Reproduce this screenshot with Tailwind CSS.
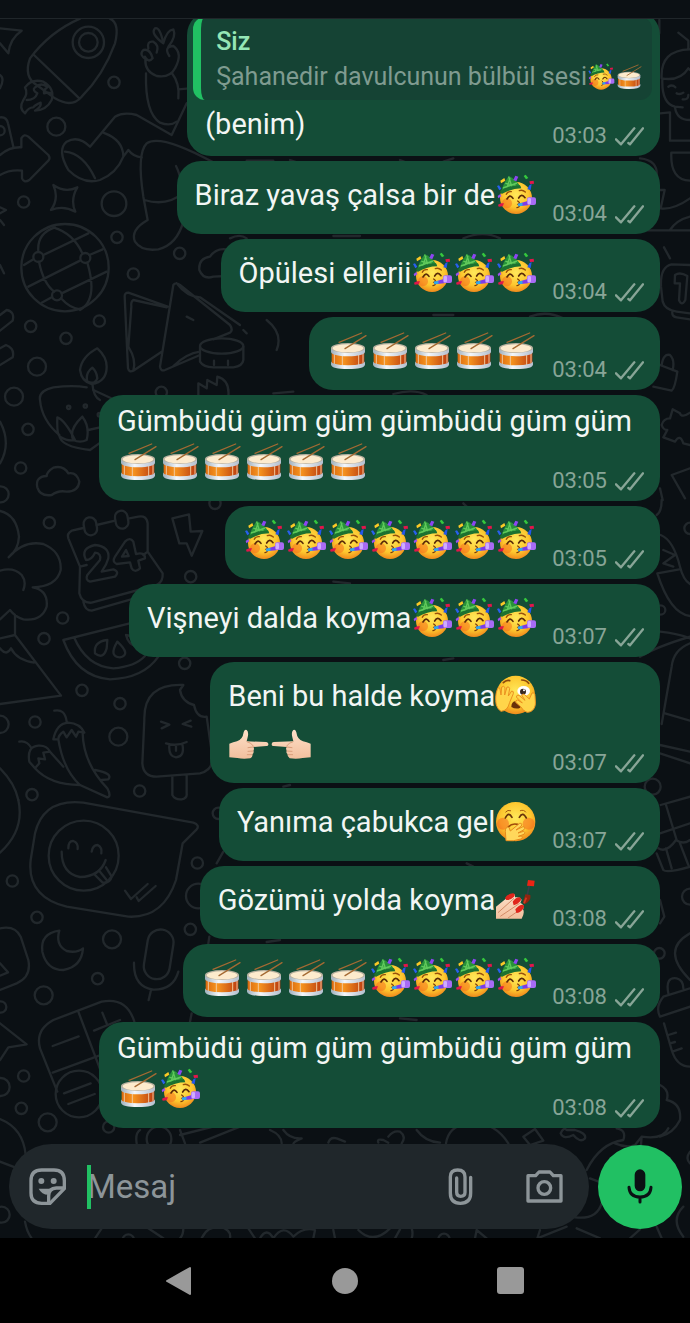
<!DOCTYPE html>
<html lang="tr">
<head>
  <meta charset="UTF-8">
  <meta name="viewport" content="width=device-width, initial-scale=1">
  <title>Sohbet</title>
  <script src="https://cdn.jsdelivr.net/npm/@tailwindcss/browser@4"></script>
</head>
<body class="bg-black font-['Roboto',sans-serif]">

  <!-- Emoji and icon symbols -->
  <svg class="absolute size-0" aria-hidden="true">
    <defs>
      <radialGradient id="skin" cx="50%" cy="40%" r="60%">
        <stop offset="0" stop-color="#ffe85a"/>
        <stop offset=".65" stop-color="#fdc72e"/>
        <stop offset="1" stop-color="#f08a1c"/>
      </radialGradient>
      <linearGradient id="barrel">
        <stop offset="0" stop-color="#d9690f"/>
        <stop offset=".35" stop-color="#f7951f"/>
        <stop offset="1" stop-color="#b93a10"/>
      </linearGradient>
      <linearGradient id="metal">
        <stop offset="0" stop-color="#9fb0bd"/>
        <stop offset=".4" stop-color="#f3f6fa"/>
        <stop offset="1" stop-color="#b3bfce"/>
      </linearGradient>
      <linearGradient id="hand" x1="0" y1="0" x2="0" y2="1">
        <stop offset="0" stop-color="#fde0c8"/>
        <stop offset="1" stop-color="#f2bf9d"/>
      </linearGradient>
    </defs>

    <symbol id="party" viewBox="0 0 126 126">
      <circle cx="63" cy="72" r="48" fill="url(#skin)"/>
      <circle cx="36" cy="88" r="15" fill="#f56a1c" opacity=".5"/>
      <path d="M18 56 C22 38 30 22 41 6 C54 12 68 24 77 38 C62 38 40 46 18 56Z" fill="#279338"/>
      <path d="M31 28 L62 34 M24 42 L66 27 M41 8 L52 42 M45 12 L34 48" stroke="#61c95c" stroke-width="4" fill="none"/>
      <path d="M15 51 Q42 34 75 34 L79 43 Q49 43 20 60Z" fill="#1c7130"/>
      <path d="M34 61 Q38 51 49 53 M73 50 Q82 46 91 54" stroke="#99510b" stroke-width="4" fill="none" stroke-linecap="round"/>
      <path d="M36 75 Q45 59 54 73 M71 72 Q80 57 90 71" stroke="#5b2b08" stroke-width="5" fill="none" stroke-linecap="round"/>
      <path d="M68 81 Q78 87 69 91 Q78 98 66 101" stroke="#7b3a08" stroke-width="4" fill="none" stroke-linecap="round"/>
      <path d="M70 89 L98 81 L99 94 L72 97Z" fill="#7c3be9"/>
      <path d="M68 89 L82 86 L83 95 L70 97Z" fill="#31a9e8"/>
      <rect x="96" y="70" width="27" height="23" rx="6" fill="#a86bf5"/>
      <rect x="98" y="72" width="10" height="19" rx="4" fill="#cfacff"/>
      <path d="M16 20 L28 12 L31 20 L18 28Z" fill="#fbc926"/>
      <path d="M61 5 L70 8 L64 22 L55 18Z" fill="#8c45f2"/>
      <path d="M86 6 L92 2 L100 12 L93 16Z" fill="#35c83e"/>
      <path d="M103 22 L116 20 L117 29 L105 30Z" fill="#e4154b"/>
      <path d="M103 34 L110 30 L107 48 L97 46Z" fill="#2356ec"/>
      <path d="M6 36 L12 34 L19 44 L13 49Z" fill="#2860f0"/>
      <path d="M8 66 L16 60 L19 67 L10 73Z" fill="#9b4ff0"/>
      <path d="M9 92 L18 88 L27 88 L23 97 L11 98Z" fill="#df1749"/>
    </symbol>

    <symbol id="drum" viewBox="0 0 126 126">
      <path d="M14 60 V99 Q14 115 63 116 Q112 115 112 99 V60Z" fill="url(#barrel)"/>
      <path d="M22 70 V105 M46 74 V110 M95 72 V108 M108 68 V100" stroke="#f1c79a" stroke-width="3"/>
      <path d="M12 94 Q14 105 63 106 Q112 105 114 94 V104 Q111 117 63 117 Q15 117 12 104Z" fill="url(#metal)"/>
      <path d="M12 54 V66 Q15 78 63 79 Q111 78 114 66 V54Z" fill="url(#metal)"/>
      <ellipse cx="63" cy="54" rx="51" ry="15" fill="#b7b09f"/>
      <ellipse cx="63" cy="55" rx="46" ry="12" fill="#fdebcd"/>
      <path d="M36 37 L104 9 M54 56 L117 17" stroke="#a56a33" stroke-width="4" stroke-linecap="round"/>
    </symbol>

    <symbol id="peek" viewBox="0 0 126 126">
      <circle cx="62" cy="60" r="58" fill="url(#skin)"/>
      <path d="M25 23 Q34 14 44 17 M80 15 Q94 15 101 25" stroke="#8f4a0c" stroke-width="5" fill="none" stroke-linecap="round"/>
      <ellipse cx="86" cy="48" rx="19" ry="15" fill="#fff"/>
      <circle cx="84" cy="50" r="9" fill="#3a2a22"/>
      <circle cx="87" cy="46" r="3" fill="#fff"/>
      <path d="M49 96 Q49 79 63 79 Q76 80 76 98 Q63 104 49 96Z" fill="#693009"/>
      <path d="M4 90 C0 72 2 50 10 38 Q16 37 16 48 L18 60 L20 36 Q27 31 30 38 L29 60 L36 36 Q43 34 44 41 L40 63 L50 48 Q57 48 55 56 L44 82 Q38 108 18 109 Q8 103 4 90Z" fill="#ffd54a" stroke="#eb9020" stroke-width="3"/>
      <path d="M121 78 C123 95 115 112 96 112 Q84 108 78 96 L62 82 Q61 75 68 75 L82 84 L64 66 Q65 58 72 61 L90 76 L80 60 Q84 55 89 59 L103 72 L111 54 Q120 52 120 62Z" fill="#ffd54a" stroke="#eb9020" stroke-width="3"/>
    </symbol>

    <symbol id="giggle" viewBox="0 0 126 126">
      <circle cx="62" cy="62" r="59" fill="url(#skin)"/>
      <circle cx="24" cy="68" r="18" fill="#f4571c" opacity=".45"/>
      <circle cx="101" cy="68" r="18" fill="#f4571c" opacity=".45"/>
      <path d="M32 33 Q38 25 47 29 M76 29 Q87 25 92 33" stroke="#a55a0e" stroke-width="3" fill="none" stroke-linecap="round"/>
      <path d="M31 51 Q41 30 51 49 M73 49 Q83 30 94 51" stroke="#6a340a" stroke-width="5" fill="none" stroke-linecap="round"/>
      <path d="M40 78 Q50 66 68 70" stroke="#a04b0b" stroke-width="5" fill="none" stroke-linecap="round"/>
      <path d="M33 119 L31 91 Q31 76 42 79 L46 90 L74 67 Q83 66 79 75 L63 87 L84 77 Q92 78 87 86 L69 96 L86 91 Q92 94 87 100 L70 106 L80 105 Q86 110 77 114 Q55 122 33 119Z" fill="#ffd75b" stroke="#e58b1d" stroke-width="3"/>
    </symbol>

    <symbol id="point" viewBox="0 0 126 126">
      <path d="M4 62 Q16 58 27 55 Q44 50 47 28 Q49 18 56 21 Q63 27 59 43 L56 55 L115 57 Q122 58 121 65 Q121 69 115 69 L76 72 Q80 77 76 83 Q79 89 73 94 Q75 101 67 106 Q45 109 28 105 L4 103Z" fill="url(#hand)"/>
      <path d="M57 56 Q69 58 77 70 M75 72 L60 74 M75 84 L60 85 M72 95 L58 95" stroke="#d99e7b" stroke-width="3" fill="none" stroke-linecap="round"/>
    </symbol>

    <symbol id="nails" viewBox="0 0 126 126">
      <path d="M3 119 V83 L40 53 Q52 41 60 47 L60 55 Q75 53 80 62 L76 72 Q91 78 84 91 Q90 101 80 119Z" fill="url(#hand)"/>
      <path d="M9 101 L57 58 M16 112 L74 73 M39 117 L78 90" stroke="#d38b67" stroke-width="3"/>
      <path d="M30 57 Q36 45 54 43 Q63 44 57 53 Q46 64 34 63Z M53 68 Q62 55 74 55 Q81 58 76 67 Q66 78 56 79Z M61 91 Q71 77 83 77 Q91 80 84 90 Q75 102 64 102Z" fill="#e0261c"/>
      <path d="M103 19 L95 56" stroke="#35404a" stroke-width="5"/>
      <path d="M99 3 L119 5 L117 22 L96 20Z" fill="#ec2414"/>
      <path d="M91 46 L106 48 Q109 64 92 74 Q80 76 87 60Z" fill="#8f2510"/>
      <path d="M94 56 L87 73" stroke="#d33820" stroke-width="5"/>
    </symbol>

    <symbol id="ticks" viewBox="0 0 87 57">
      <path d="M3 37 L18 52 L58 4 M40 48 L45 52 L84 4" fill="none" stroke="currentColor" stroke-width="7" stroke-linecap="round" stroke-linejoin="round"/>
    </symbol>
  </svg>

  <div class="flex min-h-screen flex-col">
    <div class="relative flex grow flex-col overflow-hidden bg-[#0b1014]">

      <!-- Doodle wallpaper -->
      <svg class="absolute inset-0 h-full w-full" viewBox="0 0 2070 3714" preserveAspectRatio="xMidYMid slice" fill="none" stroke="#22282c" stroke-width="7" stroke-linecap="round" stroke-linejoin="round" aria-hidden="true">
        <!-- rocket, hand, socks, globe, books -->
        <path d="M240 56 Q150 95 90 175 Q70 230 110 255 L165 295 Q215 325 245 290 Q310 225 345 130 Q360 70 330 56 M102 165 L238 295"/>
        <circle cx="265" cy="127" r="47"/><circle cx="265" cy="127" r="28"/>
        <path d="M75 340 Q55 325 70 300 Q85 280 75 262 Q95 235 130 245 Q165 265 155 300 Q140 330 105 332 Q125 320 122 308 Q105 315 100 322 Q85 322 75 340 M80 300 Q105 300 112 280 Q95 270 105 262 Q125 245 142 262 Q130 270 132 280 Q150 275 155 282"/>
        <path d="M0 85 L65 92 Q30 115 25 160 L0 130 M0 225 Q15 235 0 265 M0 352 Q20 350 24 370 L40 440"/>
        <circle cx="0" cy="392" r="14"/>
        <path d="M0 465 Q30 440 64 442 L64 415 Q72 400 85 410 L145 465 Q152 475 145 482 L88 540 Q72 550 66 535 L66 512 Q30 508 0 525"/>
        <path d="M490 130 Q450 100 465 85 Q480 80 490 130 Q500 90 520 88 Q530 110 505 140 M440 180 Q415 165 430 150 Q450 145 458 175 Q445 190 435 170 M445 145 Q440 122 460 125 Q478 135 470 158 M436 180 Q435 215 470 228 Q510 235 525 205 Q550 160 520 138 Q490 140 508 168 M438 220 Q435 340 480 368 Q510 380 530 365 M515 218 Q540 250 535 295 M535 268 L560 266"/>
        <path d="M270 440 L345 350 Q370 335 410 345 L515 405 L560 310 M270 440 Q235 405 200 425 Q170 450 205 510 Q250 555 300 540 Q350 520 370 470 Q370 420 310 398 M195 455 Q250 460 285 535 M370 470 L385 450 Q400 470 425 472"/>
        <path d="M640 487 Q480 400 440 430 Q410 460 430 590 L443 660 Q390 690 405 725 Q425 755 475 748 Q530 735 550 665 L552 580 Q540 520 528 498 M433 600 Q500 620 548 580"/>
        <path d="M160 555 Q195 580 232 562 Q210 600 226 635 Q190 615 153 630 Q178 595 160 555Z M0 622 L18 630 L0 640 M0 660 L12 675 M0 795 L12 820"/>
        <circle cx="195" cy="803" r="131"/>
        <path d="M72 795 L100 778 M130 765 L265 700 M85 860 L240 782 M268 765 L308 748 M125 908 L155 892 M185 880 L320 815 M165 682 Q110 700 115 755 M117 785 Q130 850 163 875 M160 682 Q220 700 247 760 M262 788 Q295 900 240 930 M183 895 Q210 925 240 928"/>
        <circle cx="115" cy="771" r="15"/><circle cx="256" cy="774" r="15"/><circle cx="171" cy="886" r="15"/>
        <path d="M503 920 L385 878 Q373 878 374 890 L384 1105 Q387 1118 400 1112 L485 1055 M500 922 L400 900 Q392 905 394 920 L385 1040 Q410 1080 400 1112 M520 855 L480 1100 Q482 1115 495 1110 L600 1065 M520 855 Q527 845 540 855 L690 975 Q700 990 690 998 L640 1018 M530 850 Q560 890 600 892 L720 975 M520 1098 Q560 1060 600 1055"/>
        <ellipse cx="665" cy="1038" rx="65" ry="23"/>
        <path d="M600 1040 V1085 Q610 1102 640 1102 H700 Q728 1098 730 1080 V1040 M642 1082 V1095 M684 1082 V1095 M690 750 Q650 740 630 770 Q595 775 598 810 Q610 840 640 830 L680 828"/>
        <path d="M0 945 L20 930 Q45 935 38 962 L0 992 M0 1045 L18 1035 Q45 1045 38 1072 L0 1095 M292 1045 Q245 1070 240 1110 Q245 1145 275 1152 Q320 1145 320 1100 Q320 1070 292 1045Z M277 1103 Q255 1120 262 1145 Q285 1155 292 1135 Q290 1115 277 1103Z M595 1200 V1150 L620 1165 L622 1140 L650 1155 L652 1130 Q690 1140 685 1190 M277 1150 Q280 1190 300 1200"/>
        <circle cx="342" cy="247" r="17"/><circle cx="169" cy="380" r="27"/><circle cx="71" cy="606" r="17"/><circle cx="342" cy="611" r="37"/><circle cx="351" cy="712" r="17"/><circle cx="539" cy="760" r="17"/><circle cx="400" cy="822" r="17"/><circle cx="298" cy="963" r="17"/><circle cx="92" cy="979" r="17"/><circle cx="198" cy="1015" r="17"/><circle cx="111" cy="1100" r="27"/><circle cx="484" cy="1177" r="17"/><circle cx="42" cy="1190" r="27"/>

        <!-- lantern, cloud, calendar, melon, popsicle, peppers -->
        <g transform="translate(0 1200)">
          <path d="M120 0 Q115 -28 160 -38 Q220 -45 260 -38 M120 0 Q125 60 178 105 Q180 140 270 150 L305 125 M172 52 Q170 105 180 110 Q205 125 225 120 Q195 60 172 52 M247 50 Q205 90 220 120 Q240 130 260 120 Q270 80 247 50 M265 90 L310 80 M280 -30 L345 0 M0 65 Q35 130 0 190"/>
          <circle cx="206" cy="22" r="5"/><circle cx="256" cy="18" r="5"/><circle cx="298" cy="44" r="5"/>
          <path d="M140 228 Q105 230 112 262 Q120 290 155 285 Q175 270 200 275 Q235 275 238 245 Q230 215 205 220 Q190 195 160 203 Q140 215 140 228"/>
          <path d="M0 333 Q50 345 57 410 Q55 450 26 472 Q70 420 130 432 Q185 455 182 510 Q170 560 98 562 Q145 570 140 620 Q125 665 70 658 Q45 650 30 630 L0 658 M0 512 Q40 500 65 525 Q80 545 70 570 M45 645 V705 L183 887 L0 912 M0 715 L45 705 M0 745 Q20 770 33 745 Q50 780 102 788"/>
          <path d="M250 384 L215 392 Q200 400 205 415 L240 500 L238 580 Q245 610 275 608 L470 555 Q490 545 488 520 L443 455 V370 Q440 345 415 350 L388 355 M290 375 L345 362 M240 500 L260 495 M430 465 L443 455 M250 605 Q255 632 275 632 L485 572"/>
          <rect x="252" y="352" width="38" height="54" rx="19" transform="rotate(-10 271 379)"/><rect x="346" y="332" width="38" height="54" rx="19" transform="rotate(-10 365 359)"/>
          <path d="M258 480 Q240 445 285 435 Q330 440 325 475 Q320 495 305 515 L340 508 Q360 515 345 530 L270 545 Q255 540 262 525 L300 480 Q305 460 285 458 Q275 480 258 480Z M375 425 Q390 410 400 425 L408 462 Q435 455 435 475 L415 482 L420 505 Q405 520 395 505 L390 487 L350 492 Q335 485 345 470Z M378 450 L366 470 L386 468Z"/>
          <path d="M517 355 L567 343 L572 395 L607 393 L575 467 L560 430 L538 430Z"/>
          <path d="M190 720 L410 665 M190 720 Q230 830 330 838 Q430 835 475 770 M222 712 Q260 800 340 805 Q405 800 435 768 M322 720 Q280 725 285 760 Q310 780 320 745Z M352 725 Q325 770 360 772 Q395 765 352 725Z M378 705 Q385 735 410 738 Q400 705 378 705"/>
          <path d="M550 855 Q430 850 433 960 L427 1090 Q430 1130 470 1130 L600 1120 Q640 1110 637 1070 L620 950 Q590 955 582 915 Q545 905 540 870Z M517 1130 V1185 Q525 1200 545 1198 Q562 1195 560 1180 V1125 M483 965 L508 974 L485 985 M572 962 L548 972 L574 980 M498 1030 Q530 1040 560 1026 M508 1035 Q505 1070 528 1072 Q555 1070 547 1033 M528 1035 V1052"/>
          <path d="M163 932 Q195 925 200 965 M160 1018 Q170 970 205 968 Q240 970 253 998 L235 995 L228 1010 L215 990 L200 1012 L190 995 Q175 1005 175 1018Z M175 1018 Q190 1110 240 1155 L322 1192 Q335 1190 322 1165 Q250 1090 248 1000 M58 1025 Q80 1020 95 1045 M88 1085 Q80 1040 115 1037 Q140 1035 150 1055 L130 1058 L135 1078 L115 1075 L118 1090 L105 1105Z M105 1105 Q150 1155 240 1155 M150 1055 L190 1100 M285 1110 Q340 1120 325 1138 L305 1140"/>
          <path d="M0 1105 Q45 1150 55 1200"/>
          <circle cx="84" cy="88" r="17"/><circle cx="62" cy="204" r="17"/><circle cx="2" cy="283" r="24"/><circle cx="148" cy="368" r="17"/><circle cx="645" cy="310" r="17"/><circle cx="572" cy="530" r="17"/><circle cx="188" cy="654" r="17"/><circle cx="132" cy="716" r="17"/><circle cx="554" cy="790" r="17"/><circle cx="246" cy="871" r="17"/><circle cx="360" cy="911" r="17"/><circle cx="105" cy="966" r="17"/><circle cx="355" cy="1010" r="27"/><circle cx="0" cy="973" r="26"/><circle cx="96" cy="1184" r="17"/><circle cx="419" cy="1173" r="17"/>
        </g>

        <!-- speech bubble, moon, microphone, calculator -->
        <g transform="translate(0 2400)">
          <path d="M105 100 Q130 -5 250 8 L580 68 Q600 75 590 88 L548 130 L528 240 Q490 355 385 350 L200 320 Q80 290 92 180Z M55 0 Q75 90 0 158"/>
          <circle cx="251" cy="167" r="105"/>
          <path d="M205 145 Q205 122 220 123 Q235 128 233 147 M275 155 Q278 135 293 135 Q307 142 304 160 M185 155 Q185 220 240 231 Q300 230 317 180 M282 222 L308 248 Q330 250 335 230 L318 202 M300 215 L320 240 M375 272 L393 297 L443 252 M410 292 L416 303 L467 258"/>
          <path d="M178 392 Q120 400 127 455 Q140 510 190 510 Q245 500 249 445 Q230 460 200 453 Q165 435 178 392Z"/>
          <rect x="437" y="388" width="78" height="150" rx="39" transform="rotate(9 476 463)"/>
          <path d="M402 488 Q400 560 460 569 Q520 570 535 515 M453 570 L446 600 M0 385 Q45 375 62 410 L85 480 Q95 530 50 550 L0 570 M0 490 L24 517 L0 527 M0 670 L80 733 L25 742 L0 780"/>
          <path d="M120 745 Q105 690 160 660 L305 605 Q380 590 403 665 M120 745 L172 875 M158 818 L330 755 M235 635 L305 820 M158 738 L236 709 M282 692 L360 660 M307 638 L322 675 M192 880 L272 850 M205 912 L284 882"/>
          <circle cx="237" cy="882" r="70"/>
          <path d="M650 190 L670 155 M628 410 L625 430 M575 640 L570 665 M0 957 Q70 985 77 1065"/>
          <circle cx="37" cy="243" r="17"/><circle cx="655" cy="40" r="17"/><circle cx="592" cy="189" r="17"/><circle cx="595" cy="288" r="37"/><circle cx="111" cy="352" r="17"/><circle cx="336" cy="418" r="27"/><circle cx="571" cy="388" r="17"/><circle cx="293" cy="536" r="17"/><circle cx="131" cy="586" r="27"/><circle cx="2" cy="621" r="17"/><circle cx="71" cy="828" r="17"/><circle cx="2" cy="861" r="27"/><circle cx="64" cy="925" r="17"/><circle cx="143" cy="967" r="27"/><circle cx="326" cy="981" r="17"/>
        </g>

        <!-- right margin -->
        <g transform="translate(1920 0)">
          <path d="M115 98 L145 122 V145 M150 148 Q60 150 65 235 Q120 245 145 205 L150 210 M67 240 Q65 310 105 320 L128 322 M105 322 Q110 360 150 360 M85 260 Q97 252 106 262 M110 280 Q120 285 130 278 M128 298 Q145 300 145 285 M60 340 L90 337 V422 H150 M150 458 H94 Q90 540 150 542 M58 570 H74 L62 625 Q100 630 150 595 M0 691 H150 M90 690 Q110 660 150 650 M58 60 V100 M0 475 Q55 480 50 530"/>
          <path d="M72 742 L90 775 M150 795 L95 793 Q60 800 63 860 L68 905 Q75 930 110 935 L150 940 M97 935 Q95 950 110 952 L150 958 M105 825 Q120 815 142 828 L136 900 Q125 920 117 900 L120 850 L104 850Z"/>
          <path d="M40 1160 L95 1172 Q105 1165 112 1115 L60 1095 M65 1095 Q70 1060 90 1065 Q105 1080 98 1110 M98 1228 L90 1255 Q70 1255 65 1275 Q70 1290 82 1290 L70 1312 L105 1325 Q120 1300 130 1330 L150 1335 M98 1228 L120 1240 Q125 1255 150 1238 M150 1405 L95 1425 L135 1495 M60 1465 L68 1500"/>
          <path d="M65 1500 Q65 1535 50 1545 M62 1605 Q100 1620 120 1700 Q130 1740 150 1752 M52 1720 L118 1708 M52 1720 Q90 1840 150 1848 M70 1650 L105 1665 L70 1690 L100 1700 M60 1895 Q110 1900 150 1915 M0 1970 Q50 1940 150 1910 M150 1930 Q100 1950 95 2000 L65 2172 M75 2140 L150 2162 M60 2235 L150 2255 M60 2260 L150 2290"/>
          <path d="M62 2415 L150 2390 M78 2415 L110 2520 M60 2500 L150 2470 M55 2545 Q80 2560 108 2520 Q130 2535 150 2520 M50 2560 L70 2610 Q80 2620 150 2600 M78 2545 L95 2605 M120 2530 L145 2595 M60 2700 L73 2750 L60 2770"/>
          <path d="M150 2800 Q60 2850 150 2940 M85 2980 Q75 2930 110 2935 Q130 2940 130 2965 M150 2965 L70 2990 Q45 3020 60 3050 L150 3020 M72 3070 L95 3150 Q110 3200 150 3200 M85 3105 L108 3098 M90 3130 L105 3126 M97 3155 L125 3145 M60 3255 Q90 3270 80 3300 Q125 3310 120 3360 Q100 3400 60 3410"/>
          <circle cx="150" cy="1585" r="17"/><circle cx="62" cy="1830" r="14"/><circle cx="38" cy="2360" r="24"/><circle cx="150" cy="2690" r="24"/><circle cx="58" cy="2860" r="16"/>
        </g>

        <!-- behind the composer -->
        <g transform="translate(0 3390)">
          <path d="M410 40 Q405 10 420 0 M540 0 L555 40 M540 15 L640 -10 M600 38 L720 -10 M810 0 Q845 15 845 40 M850 0 Q870 28 905 25 Q880 35 880 42 M985 38 Q990 20 1010 25 L1035 35 M0 95 L45 112 M75 275 Q80 305 95 325 M305 295 L285 325 M445 295 L490 325 M550 295 Q550 315 540 325 M605 325 Q620 290 660 290 Q695 300 690 325 M745 295 L765 325 M780 325 Q800 290 820 325 Q850 280 880 320 Q910 290 945 300 L940 325 M1000 300 L1005 325"/>
          <circle cx="477" cy="27" r="37"/><circle cx="5" cy="254" r="24"/><circle cx="385" cy="330" r="17"/>
          <path d="M1135 38 Q1130 25 1150 30 L1165 38 M1165 20 Q1180 0 1200 5 Q1220 20 1205 40 M1250 0 Q1275 35 1320 38 M1338 40 Q1345 -10 1400 -20 Q1480 -30 1525 40 M1570 20 L1605 -3 L1630 32 L1590 45Z M1682 10 Q1690 -10 1700 0 L1725 0 Q1760 10 1755 25 Q1740 40 1720 15 Q1690 30 1682 10 M1760 120 Q1800 40 1870 30 Q1880 0 1850 -5 M1845 40 Q1880 55 1905 45 L1925 20 L1920 80 M1925 20 Q1990 30 2005 -5 M1770 145 L1810 160 M1725 262 Q1790 270 1805 220 M2070 65 Q2055 85 2070 100 M2050 230 Q2010 270 2050 320 M1075 300 Q1120 345 1170 295 M1185 325 L1200 298 M1235 325 Q1240 310 1235 295 M1425 325 L1430 300 L1460 325 M1620 300 L1612 325 L1700 290 M1730 295 L1800 325 M1890 325 L1920 298 M1970 290 L1985 325"/>
          <circle cx="1332" cy="328" r="17"/>
        </g>

        <!-- scraps that show between messages -->
        <path d="M740 482 L820 482 M870 480 L900 490 M1200 480 L1225 490 M1330 485 L1360 475 M690 715 Q720 700 740 715 M1000 708 H1080 M1390 715 Q1450 690 1500 715 M560 950 L580 960 M1300 945 H1360 M1590 950 Q1640 930 1690 955 M730 990 L740 1000 M800 960 Q850 1000 830 1050 M820 1180 L880 1175 M1180 1182 Q1240 1165 1280 1185 M1390 1510 L1400 1520 M1000 1745 L1050 1750 M1330 1980 L1360 1975 M850 2360 L870 2355 M1400 2590 L1420 2600 M800 2826 L840 2820 M1200 3055 L1250 3060"/>
      </svg>

      <header class="relative h-[19px] border-b border-[#20262a] bg-[#0b1014]"></header>

      <main class="relative flex h-0 grow flex-col justify-end overflow-hidden pr-[30px] pb-4 pl-6">
        <ul id="messages" class="flex flex-col items-end gap-[5px] text-[29px] leading-[33px] text-[#f2f6f4]"></ul>
      </main>

      <form class="relative flex items-center gap-[9px] pr-2 pb-[9px] pl-[9px]" onsubmit="return false">
        <div class="flex h-[85px] min-w-0 grow items-center rounded-full bg-[#20272b] pr-[26px] pl-5 text-[#8d9599]">
          <button type="button" aria-label="Çıkartmalar" class="shrink-0">
            <svg class="size-[37px]" viewBox="0 0 111 111" fill="none" stroke="currentColor" stroke-width="10" stroke-linejoin="round">
              <path d="M38 6 H75 Q106 6 106 38 V62 L63 106 H38 Q6 106 6 75 V38 Q6 6 38 6Z"/>
              <path d="M59 104 V84 Q59 61 82 60 L104 60"/>
              <g fill="currentColor" stroke="none"><circle cx="37" cy="39" r="9"/><circle cx="74" cy="39" r="9"/><path d="M29 62 H75 Q63 66 58 80 Q38 80 29 62Z"/></g>
            </svg>
          </button>
          <div class="relative ml-[21px] min-w-0 grow">
            <input type="text" placeholder="Mesaj" aria-label="Mesaj" class="block h-11 w-full bg-transparent text-[33px] text-white outline-none placeholder:text-[#8d9599]">
            <span class="absolute top-0 left-0 h-11 w-1 bg-[#21c063]"></span>
          </div>
          <button type="button" aria-label="Dosya ekle" class="shrink-0">
            <svg class="h-[37px] w-[25px]" viewBox="0 0 75 111" fill="none" stroke="currentColor" stroke-width="10" stroke-linecap="round">
              <path d="M68 28 V75 Q68 106 37 106 Q7 106 7 75 V27 Q7 6 29 6 Q51 6 51 27 V73 Q51 85 38 85 Q26 85 26 73 V30"/>
            </svg>
          </button>
          <button type="button" aria-label="Kamera" class="ml-[53px] shrink-0">
            <svg class="h-[33px] w-[37px]" viewBox="0 0 111 99" fill="none" stroke="currentColor" stroke-width="10" stroke-linejoin="round">
              <path d="M6 17 H29 L39 6 H72 L82 17 H105 V93 H6Z"/><circle cx="55" cy="54" r="19"/>
            </svg>
          </button>
        </div>
        <button type="button" aria-label="Sesli mesaj" class="flex size-[84px] shrink-0 items-center justify-center rounded-full bg-[#21c063] text-[#0b1014]">
          <svg class="h-[35px] w-[26px]" viewBox="0 0 78 105" fill="none" stroke="currentColor" stroke-width="9" stroke-linecap="round">
            <rect x="23" y="1" width="32" height="66" rx="16" fill="currentColor" stroke="none"/>
            <path d="M6 55 Q8 84 39 84 Q70 84 72 55 M39 84 V99"/>
          </svg>
        </button>
      </form>
    </div>

    <!-- System navigation -->
    <nav class="grid h-[85px] shrink-0 grid-cols-3 items-center justify-items-center bg-black px-24 text-[#999]">
      <button type="button" aria-label="Geri"><svg class="size-[30px]" viewBox="0 0 30 30" fill="currentColor" stroke="currentColor" stroke-width="2" stroke-linejoin="round"><path d="M26 2 V28 L3 15Z"/></svg></button>
      <button type="button" aria-label="Ana ekran"><svg class="size-[30px]" viewBox="0 0 30 30" fill="currentColor"><circle cx="15" cy="15" r="13"/></svg></button>
      <button type="button" aria-label="Son uygulamalar"><svg class="size-[30px]" viewBox="0 0 30 30" fill="currentColor"><rect x="1" y="1" width="27" height="27" rx="3"/></svg></button>
    </nav>
  </div>

  <script>
    const messages = [
      { quote: { name: 'Siz', text: 'Şahanedir davulcunun bülbül sesi🥳🥁' }, lines: ['(benim)'], time: '03:03' },
      { lines: ['Biraz yavaş çalsa bir de🥳'], time: '03:04' },
      { lines: ['Öpülesi ellerii🥳🥳🥳'], time: '03:04' },
      { lines: ['🥁🥁🥁🥁🥁'], time: '03:04' },
      { lines: ['Gümbüdü güm güm gümbüdü güm güm', '🥁🥁🥁🥁🥁🥁'], time: '03:05' },
      { lines: ['🥳🥳🥳🥳🥳🥳🥳'], time: '03:05' },
      { lines: ['Vişneyi dalda koyma🥳🥳🥳'], time: '03:07' },
      { lines: ['Beni bu halde koyma🫣', '👉👈'], time: '03:07' },
      { lines: ['Yanıma çabukca gel🤭'], time: '03:07' },
      { lines: ['Gözümü yolda koyma💅'], time: '03:08' },
      { lines: ['🥁🥁🥁🥁🥳🥳🥳🥳'], time: '03:08' },
      { lines: ['Gümbüdü güm güm gümbüdü güm güm', '🥁🥳'], time: '03:08' }
    ];

    const emoji = { '🥳': 'party', '🥁': 'drum', '🫣': 'peek', '🤭': 'giggle', '👉': 'point', '👈': 'point', '💅': 'nails' };

    function withEmoji(text, size) {
      return text.replace(/\p{Extended_Pictographic}/gu, ch => {
        const flip = ch === '👈' ? '-scale-x-100' : '';
        return `<svg class="${size} ${flip} shrink-0" role="img" aria-label="${ch}"><use href="#${emoji[ch]}"/></svg>`;
      });
    }

    function renderLine(line) {
      const height = /\p{Extended_Pictographic}/u.test(line) ? 'h-12' : 'h-[33px]';
      return `<p class="flex ${height} items-center whitespace-nowrap">${withEmoji(line, 'size-[42px]')}</p>`;
    }

    function renderMessage(msg) {
      // a long text line runs above the time, so only the last line shares its row
      const wide = msg.lines[0].length > 30;
      const above = wide ? `<div class="pr-3">${renderLine(msg.lines[0])}</div>` : '';
      const rest = wide ? msg.lines.slice(1) : msg.lines;
      const quote = msg.quote ? `
        <blockquote class="-mt-1 -mr-2 mb-2 -ml-3 overflow-hidden rounded-xl border-l-8 border-[#21c063] bg-[#154334] pt-2 pr-[9px] pb-1.5 pl-[15px]">
          <p class="text-[25px] leading-[34px] font-medium text-[#95e6b5]">${msg.quote.name}</p>
          <p class="flex h-[35px] items-center text-[25px] whitespace-nowrap text-[#7f9b90]">${withEmoji(msg.quote.text, 'size-7')}</p>
        </blockquote>` : '';

      return `
        <li class="rounded-[24px] bg-[#144d37] pt-2.5 pr-4 pl-[18px]">
          ${quote}${above}
          <div class="flex items-end justify-between gap-[15px]">
            <div class="pb-[15px]">${rest.map(renderLine).join('')}</div>
            <div class="flex items-center gap-2 pb-2 text-[22px] leading-6 text-[#88a597]">
              <time>${msg.time}</time>
              <svg class="h-[19px] w-[29px]" role="img" aria-label="İletildi"><use href="#ticks"/></svg>
            </div>
          </div>
        </li>`;
    }

    document.getElementById('messages').innerHTML = messages.map(renderMessage).join('');
  </script>

</body>
</html>
